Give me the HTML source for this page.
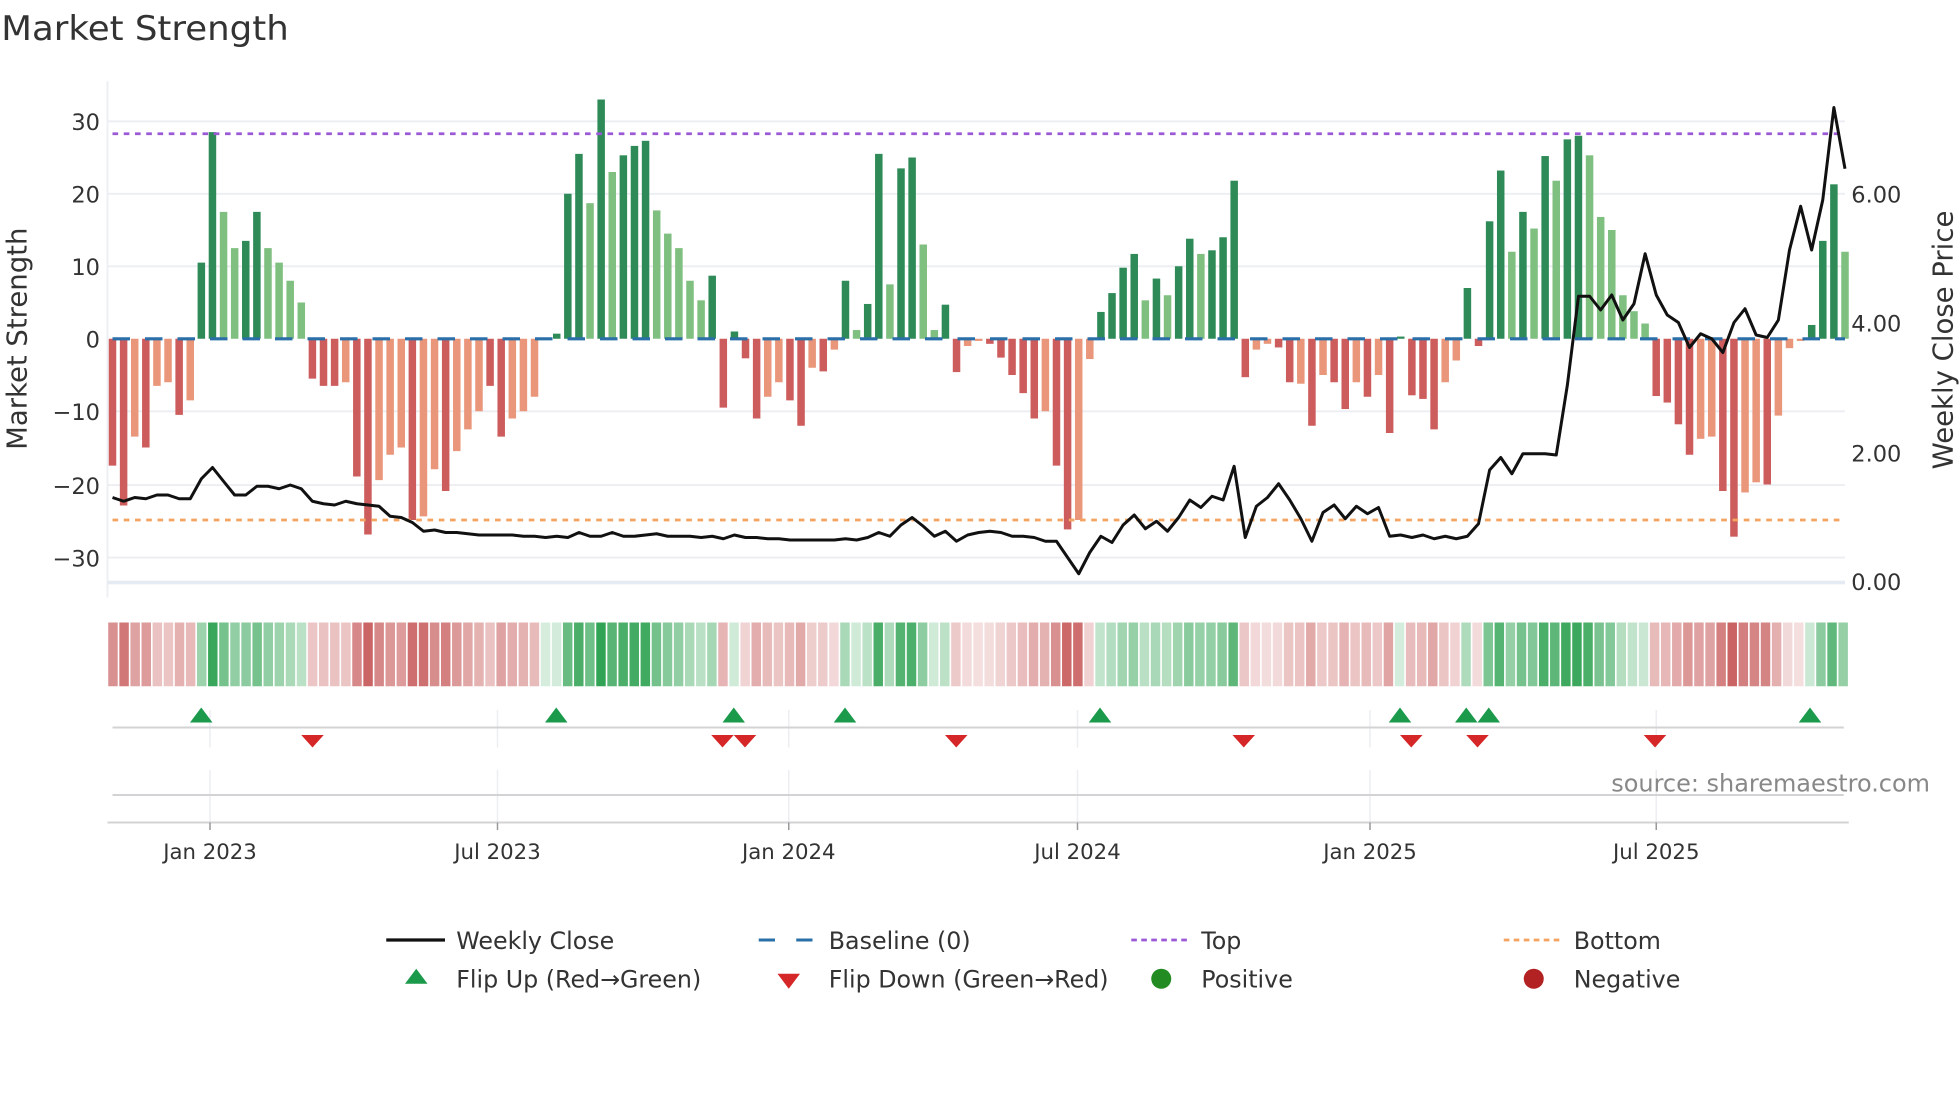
<!DOCTYPE html>
<html><head><meta charset="utf-8"><style>
html,body{margin:0;padding:0;background:#fff;overflow:hidden}
svg{display:block;font-family:"DejaVu Sans","Liberation Sans",sans-serif}
</style></head><body>
<svg id="s" width="1960" height="1102" viewBox="0 0 1568 881.6" xmlns="http://www.w3.org/2000/svg">
<rect width="1568" height="882" fill="#fff"/>
<text x="1" y="32" font-size="27" fill="#333" textLength="230" lengthAdjust="spacingAndGlyphs">Market Strength</text>
<g stroke="#eceef2" stroke-width="1.5">
<line x1="86" y1="97" x2="1476" y2="97"/><line x1="86" y1="155" x2="1476" y2="155"/><line x1="86" y1="213" x2="1476" y2="213"/><line x1="86" y1="329" x2="1476" y2="329"/><line x1="86" y1="388" x2="1476" y2="388"/><line x1="86" y1="446" x2="1476" y2="446"/>
<line x1="86" y1="65" x2="86" y2="478"/>
</g>
<line x1="86" y1="466" x2="1476" y2="466" stroke="#e6ebf3" stroke-width="3"/>
<g font-size="18" fill="#333" text-anchor="end">
<text x="80" y="104">30</text><text x="80" y="162">20</text><text x="80" y="220">10</text><text x="80" y="278">0</text><text x="80" y="336">−10</text><text x="80" y="395">−20</text><text x="80" y="453">−30</text>
</g>
<g font-size="18" fill="#333">
<text x="1481" y="162">6.00</text><text x="1481" y="265">4.00</text><text x="1481" y="369">2.00</text><text x="1481" y="472">0.00</text>
</g>
<text transform="translate(21,271) rotate(-90)" font-size="22" fill="#333" text-anchor="middle">Market Strength</text>
<text transform="translate(1562,272) rotate(-90)" font-size="22" fill="#333" text-anchor="middle">Weekly Close Price</text>
<g id="bars"></g>
<line x1="90" y1="271" x2="1476" y2="271" stroke="#2a6fa8" stroke-width="2.5" stroke-dasharray="14,12"/>
<line x1="90" y1="107" x2="1476" y2="107" stroke="#9b59d6" stroke-width="2.2" stroke-dasharray="4.5,4.5"/>
<line x1="90" y1="416" x2="1476" y2="416" stroke="#f4a460" stroke-width="2.2" stroke-dasharray="4.5,4.5"/>
<polyline id="price" fill="none" stroke="#111" stroke-width="2.4" stroke-linejoin="round"/>
<g id="strip"></g>
<g stroke="#eceef2" stroke-width="1.2">
<line x1="168" y1="568" x2="168" y2="598"/><line x1="398" y1="568" x2="398" y2="598"/><line x1="631" y1="568" x2="631" y2="598"/><line x1="862" y1="568" x2="862" y2="598"/><line x1="1096" y1="568" x2="1096" y2="598"/><line x1="1325" y1="568" x2="1325" y2="598"/>
<line x1="168" y1="616" x2="168" y2="658"/><line x1="398" y1="616" x2="398" y2="658"/><line x1="631" y1="616" x2="631" y2="658"/><line x1="862" y1="616" x2="862" y2="658"/><line x1="1096" y1="616" x2="1096" y2="658"/><line x1="1325" y1="616" x2="1325" y2="658"/>
</g>
<line x1="90" y1="582" x2="1475" y2="582" stroke="#d3d3d6" stroke-width="1.6"/>
<line x1="90" y1="636" x2="1475" y2="636" stroke="#d3d3d6" stroke-width="1.6"/>
<line x1="86" y1="658" x2="1479" y2="658" stroke="#d3d3d6" stroke-width="1.6"/>
<g stroke="#999" stroke-width="1.2">
<line x1="168" y1="658" x2="168" y2="664"/><line x1="398" y1="658" x2="398" y2="664"/><line x1="631" y1="658" x2="631" y2="664"/><line x1="862" y1="658" x2="862" y2="664"/><line x1="1096" y1="658" x2="1096" y2="664"/><line x1="1325" y1="658" x2="1325" y2="664"/>
</g>
<g id="marks"></g>
<text x="1289" y="633" font-size="19" fill="#888" textLength="255" lengthAdjust="spacingAndGlyphs">source: sharemaestro.com</text>
<g font-size="17" fill="#333" text-anchor="middle">
<text x="168" y="687">Jan 2023</text><text x="398" y="687">Jul 2023</text><text x="631" y="687">Jan 2024</text><text x="862" y="687">Jul 2024</text><text x="1096" y="687">Jan 2025</text><text x="1325" y="687">Jul 2025</text>
</g>
<g font-size="19" fill="#333">
<line x1="309" y1="752" x2="356" y2="752" stroke="#111" stroke-width="2.6"/>
<text x="365" y="759">Weekly Close</text>
<line x1="607" y1="752" x2="652" y2="752" stroke="#2a6fa8" stroke-width="2.4" stroke-dasharray="13,17"/>
<text x="663" y="759">Baseline (0)</text>
<line x1="905" y1="752" x2="950" y2="752" stroke="#9b59d6" stroke-width="2.2" stroke-dasharray="4.5,3.5"/>
<text x="961" y="759">Top</text>
<line x1="1203" y1="752" x2="1248" y2="752" stroke="#f4a460" stroke-width="2.2" stroke-dasharray="4.5,3.5"/>
<text x="1259" y="759">Bottom</text>
<polygon points="333,775 324,787 342,787" fill="#1a9a4a"/>
<text x="365" y="790">Flip Up (Red→Green)</text>
<polygon points="622,779 640,779 631,791" fill="#d62728"/>
<text x="663" y="790">Flip Down (Green→Red)</text>
<circle cx="929" cy="783" r="8" fill="#228b22"/>
<text x="961" y="790">Positive</text>
<circle cx="1227" cy="783" r="8" fill="#b22222"/>
<text x="1259" y="790">Negative</text>
</g>
</svg>
<script>
var v=[[-17.5,1],[-23,1],[-13.5,0],[-15,1],[-6.5,0],[-6,0],[-10.5,1],[-8.5,0],[10.5,1],[28.5,1],[17.5,0],[12.5,0],[13.5,1],[17.5,1],[12.5,0],[10.5,0],[8,0],[5,0],[-5.5,1],[-6.5,1],[-6.5,1],[-6,0],[-19,1],[-27,1],[-19.5,0],[-16,0],[-15,0],[-25,1],[-24.5,0],[-18,0],[-21,1],[-15.5,0],[-12.5,0],[-10,0],[-6.5,1],[-13.5,1],[-11,0],[-10,0],[-8,0],[0,0],[0.7,1],[20,1],[25.5,1],[18.7,0],[33,1],[23,0],[25.3,1],[26.6,1],[27.3,1],[17.7,0],[14.5,0],[12.5,0],[8,0],[5.3,0],[8.7,1],[-9.5,1],[1,1],[-2.7,1],[-11,1],[-8,0],[-6,0],[-8.5,1],[-12,1],[-4,0],[-4.5,1],[-1.5,0],[8,1],[1.2,0],[4.8,1],[25.5,1],[7.5,0],[23.5,1],[25,1],[13,0],[1.2,0],[4.7,1],[-4.6,1],[-1,0],[-0.3,0],[-0.7,1],[-2.6,1],[-5,1],[-7.5,1],[-11,1],[-10,0],[-17.5,1],[-26.3,1],[-25,0],[-2.8,0],[3.7,1],[6.3,1],[9.8,1],[11.7,1],[5.3,0],[8.3,1],[6,0],[10,1],[13.8,1],[11.7,0],[12.2,1],[14,1],[21.8,1],[-5.3,1],[-1.5,0],[-0.7,0],[-1.2,1],[-6,1],[-6.2,0],[-12,1],[-5,0],[-6,1],[-9.7,1],[-6,0],[-8,1],[-5,0],[-13,1],[0.3,1],[-7.8,1],[-8.3,1],[-12.5,1],[-6,0],[-3,0],[7,1],[-1,1],[16.2,1],[23.2,1],[12,0],[17.5,1],[15.2,0],[25.2,1],[21.8,0],[27.5,1],[28,1],[25.3,0],[16.8,0],[15,0],[6,0],[3.8,0],[2.1,0],[-7.9,1],[-8.8,1],[-11.8,1],[-16,1],[-13.8,0],[-13.5,0],[-21,1],[-27.3,1],[-21.2,0],[-19.8,0],[-20.1,1],[-10.6,0],[-1.3,0],[-0.3,0],[1.9,1],[13.5,1],[21.3,1],[12,0]];
var py=[398,401,398,399,396,396,399,399,383,374,385,396,396,389,389,391,388,391,401,403,404,401,403,404,405,413,414,418,425,424,426,426,427,428,428,428,428,429,429,430,429,430,426,429,429,426,429,429,428,427,429,429,429,430,429,431,428,430,430,431,431,432,432,432,432,432,431,432,430,426,429,420,414,421,429,425,433,428,426,425,426,429,429,430,433,433,446,459,442,429,434,420,412,423,417,425,414,400,406,397,400,373,430,405,398,387,400,415,433,410,404,415,405,411,406,429,428,430,428,431,429,431,429,419,376,366,379,363,363,363,364,308,237,237,248,236,256,243,203,236,252,258,278,267,271,282,258,247,268,270,256,200,165,200,160,86,135];
var NS="http://www.w3.org/2000/svg",n=v.length,step=(1476-90)/(n-1);
function el(t,a,p){var e=document.createElementNS(NS,t);for(var k in a)e.setAttribute(k,a[k]);p.appendChild(e);return e}
var B=document.getElementById('bars'),S=document.getElementById('strip'),M=document.getElementById('marks'),pts=[];
function mix(c,t){var w=[255,255,255];return 'rgb('+c.map(function(x,i){return Math.round(w[i]+(x-w[i])*t)}).join(',')+')'}
for(var i=0;i<n;i++){var x=90+i*step,val=v[i][0],d=v[i][1],h=Math.abs(val)*5.8;
var col=val>=0?(d?'#2e8b57':'#7fbf7f'):(d?'#cd5c5c':'#e9967a');
if(h>0.3)el('rect',{x:x-3,y:val>=0?271-h:271,width:6,height:h,fill:col},B);
var t=val>=0?0.2+0.8*Math.min(1,val/30):0.2+0.8*Math.min(1,-val/28);
var c=val>=0?mix([49,163,84],t):mix([201,96,96],t);
el('rect',{x:86+i*(1393/n)+0.6,y:498,width:1393/n-1.3,height:51,fill:c},S);
pts.push(x.toFixed(1)+','+py[i]);}
document.getElementById('price').setAttribute('points',pts.join(' '));
[161,445,587,676,880,1120,1173,1191,1448].forEach(function(x){el('polygon',{points:x+',566 '+(x-9)+',578 '+(x+9)+',578',fill:'#1a9a4a'},M)});
[250,578,596,765,995,1129,1182,1324].forEach(function(x){el('polygon',{points:(x-9)+',588 '+(x+9)+',588 '+x+',598',fill:'#d62728'},M)});
</script>
</body></html>
